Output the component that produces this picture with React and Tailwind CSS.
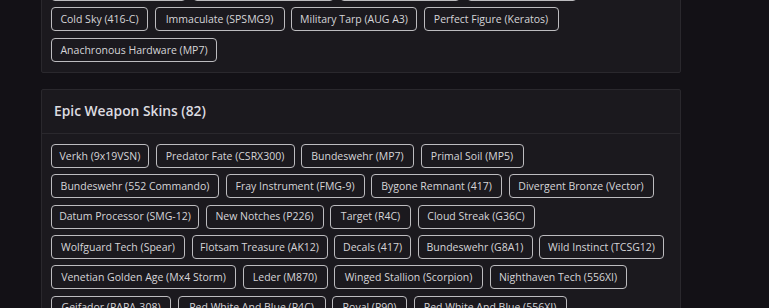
import React from "react";

const hiddenRow = [
  { t: "Urban Assault (Mx4 Storm)", w: "w-[135px]" },
  { t: "Shattered Glass (Commando 9)", w: "w-[141px]" },
  { t: "Dusk Raider (SR-25)", w: "w-[120px]" },
  { t: "Oxidized (T-95 LSW)", w: "w-[110px]" },
];

const topChips = [
  { t: "Cold Sky (416-C)", w: "w-[97px]" },
  { t: "Immaculate (SPSMG9)", w: "w-[130px]" },
  { t: "Military Tarp (AUG A3)", w: "w-[126px]" },
  { t: "Perfect Figure (Keratos)", w: "w-[135px]" },
  { t: "Anachronous Hardware (MP7)", w: "w-[166px]" },
];

const epicChips = [
  { t: "Verkh (9x19VSN)", w: "w-[98px]" },
  { t: "Predator Fate (CSRX300)", w: "w-[139px]" },
  { t: "Bundeswehr (MP7)", w: "w-[113px]" },
  { t: "Primal Soil (MP5)", w: "w-[103px]" },
  { t: "Bundeswehr (552 Commando)", w: "w-[168px]" },
  { t: "Fray Instrument (FMG-9)", w: "w-[139px]" },
  { t: "Bygone Remnant (417)", w: "w-[131px]" },
  { t: "Divergent Bronze (Vector)", w: "w-[145px]" },
  { t: "Datum Processor (SMG-12)", w: "w-[148px]" },
  { t: "New Notches (P226)", w: "w-[118px]" },
  { t: "Target (R4C)", w: "w-[81px]" },
  { t: "Cloud Streak (G36C)", w: "w-[117px]" },
  { t: "Wolfguard Tech (Spear)", w: "w-[134px]" },
  { t: "Flotsam Treasure (AK12)", w: "w-[136px]" },
  { t: "Decals (417)", w: "w-[77px]" },
  { t: "Bundeswehr (G8A1)", w: "w-[115px]" },
  { t: "Wild Instinct (TCSG12)", w: "w-[125px]" },
  { t: "Venetian Golden Age (Mx4 Storm)", w: "w-[185px]" },
  { t: "Leder (M870)", w: "w-[85px]" },
  { t: "Winged Stallion (Scorpion)", w: "w-[149px]" },
  { t: "Nighthaven Tech (556XI)", w: "w-[137px]" },
  { t: "Geifador (PARA-308)", w: "w-[120px]" },
  { t: "Red White And Blue (R4C)", w: "w-[148px]" },
  { t: "Royal (P90)", w: "w-[75px]" },
  { t: "Red White And Blue (556XI)", w: "w-[153px]" },
  { t: "Obsidian Shard (AR33)", w: "w-[130px]" },
  { t: "Crimson Tide (F2)", w: "w-[105px]" },
];

function Chip({ t, w }) {
  return (
    <span
      className={`flex h-[24px] items-center justify-center rounded-[4px] border border-[#bdbcbf] text-[10.5px] font-medium leading-none text-[#d6d5d8] whitespace-nowrap ${w}`}
    >
      {t}
    </span>
  );
}

function ChipList({ items }) {
  return (
    <div className="flex flex-wrap gap-x-[6.5px] gap-y-[6.4px]">
      {items.map((c, i) => (
        <Chip key={i} t={c.t} w={c.w} />
      ))}
    </div>
  );
}

export default function App() {
  return (
    <div
      className="h-[308px] w-full overflow-hidden bg-[#131116] pl-[41px]"
      style={{ fontFamily: '"Open Sans", "Noto Sans", sans-serif' }}
    >
      <div className="flex w-[640px] flex-col gap-[16px]">
        <div className="mt-[-34px] rounded-[2px] border border-[#2a282d] bg-[#1b191e] px-[9px] pb-[10px] pt-[10px]">
          <ChipList items={[...hiddenRow, ...topChips]} />
        </div>
        <div className="rounded-[2px] border border-[#2a282d] bg-[#1b191e]">
          <div className="flex h-[44px] items-center border-b border-[#2a282d] px-[12px]">
            <h2 className="text-[13.8px] font-semibold text-[#dddce0]">
              Epic Weapon Skins (82)
            </h2>
          </div>
          <div className="px-[9px] pb-[10px] pt-[10px]">
            <ChipList items={epicChips} />
          </div>
        </div>
      </div>
    </div>
  );
}
